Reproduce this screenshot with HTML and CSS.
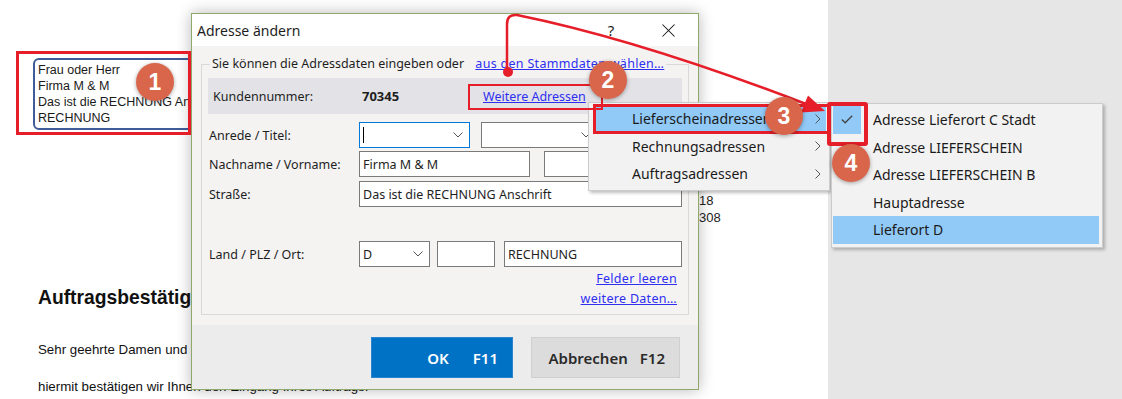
FILE: index.html
```html
<!DOCTYPE html>
<html lang="de">
<head>
  <meta charset="UTF-8" />
  <title>Adresse ändern</title>
  <link rel="stylesheet" href="styles.css">
</head>
<body>
  <div class="screen">

    <div class="doc">
      <div class="letter">
        <div class="addr">
          <div>Frau oder Herr</div>
          <div>Firma M &amp; M</div>
          <div>Das ist die RECHNUNG Anschrift</div>
          <div>RECHNUNG</div>
        </div>
        <h2>Auftragsbestätigung</h2>
        <p class="p1">Sehr geehrte Damen und Herren,</p>
        <p class="p2">hiermit bestätigen wir Ihnen den Eingang Ihres Auftrags.</p>
      </div>
      <div class="info">
        <div>18</div>
        <div>308</div>
      </div>
    </div>
    <div class="side"></div>

    <div class="dialog">
      <div class="titlebar">
        <span class="title">Adresse ändern</span>
        <span class="help">?</span>
        <span class="close"><span class="x"></span></span>
      </div>

      <div class="body">
        <fieldset>
          <legend>Sie können die Adressdaten eingeben oder <a class="link">aus den Stammdaten wählen…</a></legend>

          <div class="kd">
            <span class="lbl">Kundennummer:</span>
            <span class="num">70345</span>
            <a class="link">Weitere Adressen</a>
          </div>

          <div class="row r1">
            <label>Anrede / Titel:</label>
            <div class="field combo focus w111"><span class="caret"></span><span class="chev"><svg width="10" height="6" viewBox="0 0 10 6"><path d="M0.5 0.5L5 5L9.5 0.5" fill="none" stroke="#555"/></svg></span></div>
            <div class="field combo w117 ml11"><span class="chev"><svg width="10" height="6" viewBox="0 0 10 6"><path d="M0.5 0.5L5 5L9.5 0.5" fill="none" stroke="#555"/></svg></span></div>
          </div>

          <div class="row r2">
            <label>Nachname / Vorname:</label>
            <div class="field w171">Firma M &amp; M</div>
            <div class="field grow ml14"></div>
          </div>

          <div class="row r3">
            <label>Straße:</label>
            <div class="field grow">Das ist die RECHNUNG Anschrift</div>
          </div>

          <div class="row r4">
            <label>Land / PLZ / Ort:</label>
            <div class="field combo w71">D<span class="chev"><svg width="10" height="6" viewBox="0 0 10 6"><path d="M0.5 0.5L5 5L9.5 0.5" fill="none" stroke="#555"/></svg></span></div>
            <div class="field w58 ml7"></div>
            <div class="field grow ml9">RECHNUNG</div>
          </div>

          <div class="links">
            <a class="link">Felder leeren</a>
            <a class="link">weitere Daten…</a>
          </div>
        </fieldset>
      </div>

      <div class="foot">
        <button class="btn ok"><span>OK</span><span class="key">F11</span></button>
        <button class="btn cancel"><span>Abbrechen</span><span class="key">F12</span></button>
      </div>
    </div>

    <div class="menu menu-main">
      <div class="mi hot">Lieferscheinadressen<span class="arr"><svg width="6" height="10" viewBox="0 0 6 10"><path d="M0.5 0.5L5 5L0.5 9.5" fill="none" stroke="#555"/></svg></span></div>
      <div class="mi">Rechnungsadressen<span class="arr"><svg width="6" height="10" viewBox="0 0 6 10"><path d="M0.5 0.5L5 5L0.5 9.5" fill="none" stroke="#555"/></svg></span></div>
      <div class="mi">Auftragsadressen<span class="arr"><svg width="6" height="10" viewBox="0 0 6 10"><path d="M0.5 0.5L5 5L0.5 9.5" fill="none" stroke="#555"/></svg></span></div>
    </div>

    <div class="menu menu-sub">
      <div class="si"><span class="chk on"><svg width="12" height="9" viewBox="0 0 12 9"><path d="M0.8 4.5L4.2 7.8L11.2 0.8" fill="none" stroke="#444" stroke-width="1.3"/></svg></span>Adresse Lieferort C Stadt</div>
      <div class="si"><span class="chk"></span>Adresse LIEFERSCHEIN</div>
      <div class="si"><span class="chk"></span>Adresse LIEFERSCHEIN B</div>
      <div class="si"><span class="chk"></span>Hauptadresse</div>
      <div class="si hot"><span class="chk"></span>Lieferort D</div>
    </div>

    <svg class="arrows" width="1122" height="399" viewBox="0 0 1122 399">
      <path d="M507 72L507 24Q507 14 517 15Q640 40 806 104" fill="none" stroke="#e61e2a" stroke-width="2.5"/>
      <polygon points="825,111 808,95.5 801,112.5" fill="#e61e2a"/>
      <circle cx="508" cy="72" r="5" fill="#e61e2a"/>
    </svg>

    <div class="mark m1"></div>
    <div class="mark m2"></div>
    <div class="mark m3"></div>
    <div class="mark m4"></div>

    <div class="badge b1">1</div>
    <div class="badge b2">2</div>
    <div class="badge b3">3</div>
    <div class="badge b4">4</div>
  </div>
</body>
</html>
```

FILE: styles.css
```css
* {
  box-sizing: border-box;
}

body {
  margin: 0;
  font-family: "Liberation Sans", Arial, sans-serif;
  color: #111;
}

.screen {
  position: relative;
  width: 1122px;
  height: 399px;
  overflow: hidden;
  display: flex;
}

/* document behind the dialog */
.doc {
  width: 828px;
  background: #fff;
  display: flex;
}

.letter {
  flex: 1;
  padding-left: 33px;
}

.addr {
  margin-top: 58px;
  width: 220px;
  height: 72px;
  border: 2px solid #3f5b99;
  border-radius: 6px;
  padding: 2px 0 0 3px;
  font-size: 12.5px;
  line-height: 16px;
  color: #1a1a1a;
  white-space: nowrap;
  overflow: hidden;
}

.letter h2 {
  margin: 157px 0 0 5px;
  font-size: 19.3px;
  line-height: 22px;
  white-space: nowrap;
}

.letter p {
  margin: 0 0 0 5px;
  font-size: 13.3px;
  line-height: 16px;
  white-space: nowrap;
}

.letter .p1 {
  margin-top: 33px;
}

.letter .p2 {
  margin-top: 21px;
}

.info {
  width: 129px;
  padding-top: 192px;
  font-size: 13px;
  line-height: 17px;
  color: #222;
}

.side {
  flex: 1;
  background: #e6e6e6;
}

/* dialog */
.dialog {
  position: absolute;
  left: 191px;
  top: 13px;
  width: 508px;
  height: 377px;
  border: 1px solid #8fa86b;
  background: #f4f3f2;
  box-shadow: 0 0 14px rgba(0,0,0,0.28);
  font-family: "Noto Sans", sans-serif;
  font-size: 12.5px;
  color: #1e1e1e;
  display: flex;
  flex-direction: column;
}

.titlebar {
  height: 32px;
  background: #fff;
  display: flex;
  align-items: center;
  padding-left: 5px;
  padding-right: 7px;
}

.title {
  flex: 1;
  font-size: 14px;
}

.help {
  width: 24px;
  text-align: center;
  font-size: 15px;
  margin-right: 22px;
}

.close {
  width: 46px;
  height: 32px;
  display: flex;
  align-items: center;
  justify-content: center;
}

.x {
  position: relative;
  width: 13px;
  height: 13px;
}

.x::before,
.x::after {
  content: "";
  position: absolute;
  left: -2px;
  top: 6px;
  width: 17px;
  height: 1px;
  background: #111;
  transform: rotate(45deg);
}

.x::after {
  transform: rotate(-45deg);
}

.body {
  flex: 1;
  padding: 10px 9px 0;
}

fieldset {
  margin: 0;
  padding: 0 6px 6px;
  border: 1px solid #d9d9d9;
  height: 259px;
}

legend {
  margin-left: 2px;
  padding: 0 2px;
  line-height: 16px;
}

.link {
  color: #2f2ff0;
  text-decoration: underline;
}

legend .link {
  margin-left: 8px;
  letter-spacing: 0.3px;
}

.kd {
  height: 36px;
  margin-top: 6px;
  background: #e3e3e7;
  display: flex;
  align-items: center;
  padding-left: 5px;
}

.kd .lbl {
  width: 149px;
}

.kd .num {
  width: 121px;
  font-weight: 700;
  font-size: 13px;
}

.row {
  display: flex;
  align-items: center;
  height: 26px;
}

.row label {
  width: 151px;
  padding-left: 1px;
}

.r1 { margin-top: 8px; }
.r2 { margin-top: 3px; }
.r3 { margin-top: 4px; }
.r4 { margin-top: 34px; }

.field {
  height: 26px;
  border: 1px solid #7a7a7a;
  background: #fff;
  padding-left: 3px;
  display: flex;
  align-items: center;
  white-space: nowrap;
}

.field.focus {
  border-color: #0078d7;
}

.combo .chev {
  margin-left: auto;
  width: 22px;
  display: flex;
  justify-content: center;
}

.caret {
  width: 1px;
  height: 16px;
  background: #000;
}

.grow { flex: 1; }
.w58 { width: 58px; }
.w71 { width: 71px; }
.w111 { width: 111px; }
.w117 { width: 117px; }
.w171 { width: 171px; }
.ml7 { margin-left: 7px; }
.ml9 { margin-left: 9px; }
.ml11 { margin-left: 11px; }
.ml14 { margin-left: 14px; }

.links {
  margin-top: 2px;
  padding-right: 5px;
  display: flex;
  flex-direction: column;
  align-items: flex-end;
  line-height: 20px;
  letter-spacing: 0.3px;
}

.foot {
  height: 64px;
  background: #ececec;
  display: flex;
  justify-content: flex-end;
  align-items: flex-start;
  gap: 18px;
  padding: 12px 18px 0 0;
}

.btn {
  height: 41px;
  display: flex;
  align-items: center;
  justify-content: flex-end;
  padding: 0 14px 0 0;
  font-family: "Noto Sans", sans-serif;
  font-size: 15px;
  font-weight: 600;
}

.ok {
  width: 142px;
  background: #0072c6;
  border: 1px solid #2a84cf;
  color: #fff;
}

.ok .key {
  margin-left: 24px;
}

.cancel {
  width: 149px;
  background: #dcdcdc;
  border: 1px solid #cfcfcf;
  color: #2a2a2a;
}

.cancel .key {
  margin-left: 12px;
}

/* context menus */
.menu {
  position: absolute;
  background: #f2f2f2;
  border: 1px solid #cccccc;
  box-shadow: 2px 2px 3px rgba(0,0,0,0.25);
  font-family: "Noto Sans", sans-serif;
  font-size: 14px;
  color: #1a1a1a;
}

.menu-main {
  left: 588px;
  top: 102px;
  width: 242px;
  padding: 2px 3px 2px 5px;
}

.mi {
  height: 27.5px;
  display: flex;
  align-items: center;
  padding: 0 5px 0 38px;
}

.mi .arr {
  margin-left: auto;
  display: flex;
}

.hot {
  background: #91c9f7;
}

.menu-sub {
  left: 831px;
  top: 103px;
  width: 272px;
  padding: 2px 3px 3px 1px;
}

.si {
  height: 27.5px;
  display: flex;
  align-items: center;
}

.si .chk {
  width: 28px;
  height: 100%;
  margin-right: 12px;
  display: flex;
  align-items: center;
  justify-content: center;
}

.si .chk.on {
  background: #91c9f7;
}

/* annotations */
.arrows {
  position: absolute;
  left: 0;
  top: 0;
  pointer-events: none;
}

.mark {
  position: absolute;
  border: 3px solid #e61e2a;
}

.m1 { left: 16px; top: 51px; width: 175px; height: 84px; }
.m2 { left: 468px; top: 84px; width: 135px; height: 26px; border-width: 2px; }
.m3 { left: 593px; top: 104px; width: 237px; height: 30px; }
.m4 { left: 827px; top: 102px; width: 41px; height: 44px; border-width: 4px; border-radius: 3px; }

.badge {
  position: absolute;
  width: 38px;
  height: 38px;
  border-radius: 50%;
  background: #d9654a;
  color: #fff;
  font: 700 23px/38px "Liberation Sans", Arial, sans-serif;
  text-align: center;
  box-shadow: 0 1px 4px rgba(0,0,0,0.35);
}

.b1 { left: 136px; top: 63px; }
.b2 { left: 589px; top: 61px; }
.b3 { left: 765px; top: 97px; }
.b4 { left: 832px; top: 144px; }
```
